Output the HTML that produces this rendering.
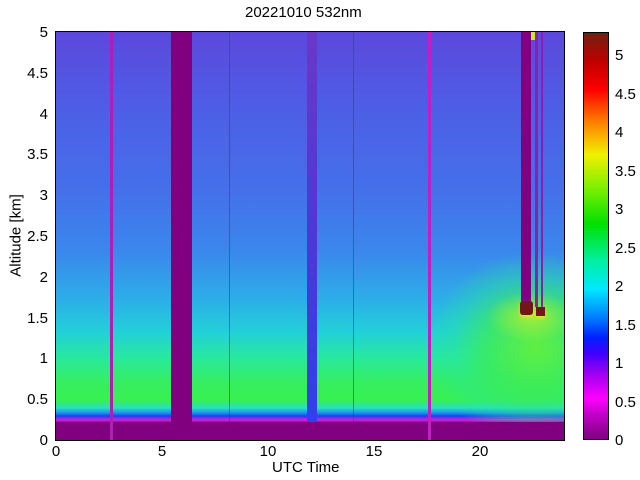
<!DOCTYPE html>
<html><head><style>
body{margin:0;width:640px;height:480px;background:#fff;position:relative;overflow:hidden;font-family:"Liberation Sans",sans-serif;color:#000}
.a{position:absolute}
.t{position:absolute;font-size:15px;line-height:15px}
.yl{position:absolute;font-size:15px;line-height:15px;right:592px;text-align:right}
.cl{position:absolute;font-size:15px;line-height:15px;left:615px}
.xl{position:absolute;font-size:15px;line-height:15px;width:40px;text-align:center}
</style></head><body>
<div class="t" style="left:245px;top:5px">20221010 532nm</div>
<div class="t" style="left:272px;top:460px">UTC Time</div>
<div class="t" style="left:-29px;top:228px;transform:rotate(-90deg);width:90px;text-align:center">Altitude [km]</div>

<div class="a" style="left:56px;top:32px;width:508px;height:408px;overflow:hidden;background:linear-gradient(to bottom,#5c48dc 0px,#4d5fe6 80px,#4470ea 160px,#3a88ec 220px,#2cb0e8 270px,#22d0d8 300px,#28e8a0 325px,#35ee60 350px,#38f050 368px,#28e0c0 376px,#1890f0 381px,#2040f0 384px,#d020e0 388px,#800080 391px,#800080 408px)">
<div class="a" style="left:370px;top:220px;width:220px;height:190px;background:radial-gradient(closest-side,rgba(100,240,60,.95) 0%,rgba(60,235,90,.8) 45%,rgba(40,230,150,.4) 75%,rgba(40,220,200,0) 100%)"></div>
<div class="a" style="left:430px;top:260px;width:90px;height:50px;background:radial-gradient(closest-side,rgba(200,240,40,.7),rgba(160,240,40,0) 100%)"></div>
<div class="a" style="left:0;top:390px;width:508px;height:18px;background:#800080"></div>
<div class="a" style="left:54px;top:0;width:3px;height:408px;background:#b020b0"></div>
<div class="a" style="left:115px;top:0;width:21px;height:408px;background:#800080"></div>
<div class="a" style="left:173px;top:0;width:1px;height:390px;background:#3040a0;opacity:.6"></div>
<div class="a" style="left:251px;top:0;width:10px;height:390px;background:linear-gradient(to bottom,#6a38c8,#4838d8 60%,#3040e8)"></div>
<div class="a" style="left:297px;top:0;width:1px;height:390px;background:#3040a0;opacity:.6"></div>
<div class="a" style="left:372px;top:0;width:3px;height:408px;background:#c020c0"></div>
<div class="a" style="left:465px;top:0;width:10px;height:271px;background:#800080"></div>
<div class="a" style="left:464px;top:269px;width:13px;height:14px;background:#701818;border-radius:3px;box-shadow:0 2px 3px #f0e020"></div>
<div class="a" style="left:479px;top:0;width:3px;height:275px;background:#9020a0"></div>
<div class="a" style="left:485px;top:0;width:2px;height:275px;background:#9020a0"></div>
<div class="a" style="left:480px;top:275px;width:9px;height:9px;background:#701818;box-shadow:0 2px 3px #f0e020"></div>
<div class="a" style="left:475px;top:0;width:4px;height:8px;background:#c0f020"></div>
</div>
<div class="a" style="left:55px;top:31px;width:508px;height:408px;border:1px solid #000"></div>

<div class="a" style="left:583px;top:32px;width:26px;height:408px;border:1px solid #000;box-sizing:border-box;background:linear-gradient(to top,#800080 0%,#c000c8 6%,#ff00ff 10%,#a000f0 16%,#4000ff 21%,#0020ff 25%,#0080ff 30%,#00e8ff 37%,#00f0a0 44%,#00e000 53%,#80f000 62%,#f0f000 70%,#ff8000 78%,#ff0000 86%,#c00000 93%,#702010 100%)"></div>

<div class="yl" style="top:25px">5</div>
<div class="yl" style="top:66px">4.5</div>
<div class="yl" style="top:107px">4</div>
<div class="yl" style="top:147px">3.5</div>
<div class="yl" style="top:188px">3</div>
<div class="yl" style="top:229px">2.5</div>
<div class="yl" style="top:270px">2</div>
<div class="yl" style="top:311px">1.5</div>
<div class="yl" style="top:351px">1</div>
<div class="yl" style="top:392px">0.5</div>
<div class="yl" style="top:433px">0</div>

<div class="xl" style="left:36px;top:444px">0</div>
<div class="xl" style="left:142px;top:444px">5</div>
<div class="xl" style="left:248px;top:444px">10</div>
<div class="xl" style="left:354px;top:444px">15</div>
<div class="xl" style="left:460px;top:444px">20</div>

<div class="cl" style="top:48px">5</div>
<div class="cl" style="top:87px">4.5</div>
<div class="cl" style="top:125px">4</div>
<div class="cl" style="top:164px">3.5</div>
<div class="cl" style="top:202px">3</div>
<div class="cl" style="top:241px">2.5</div>
<div class="cl" style="top:279px">2</div>
<div class="cl" style="top:318px">1.5</div>
<div class="cl" style="top:356px">1</div>
<div class="cl" style="top:395px">0.5</div>
<div class="cl" style="top:433px">0</div>
</body></html>
